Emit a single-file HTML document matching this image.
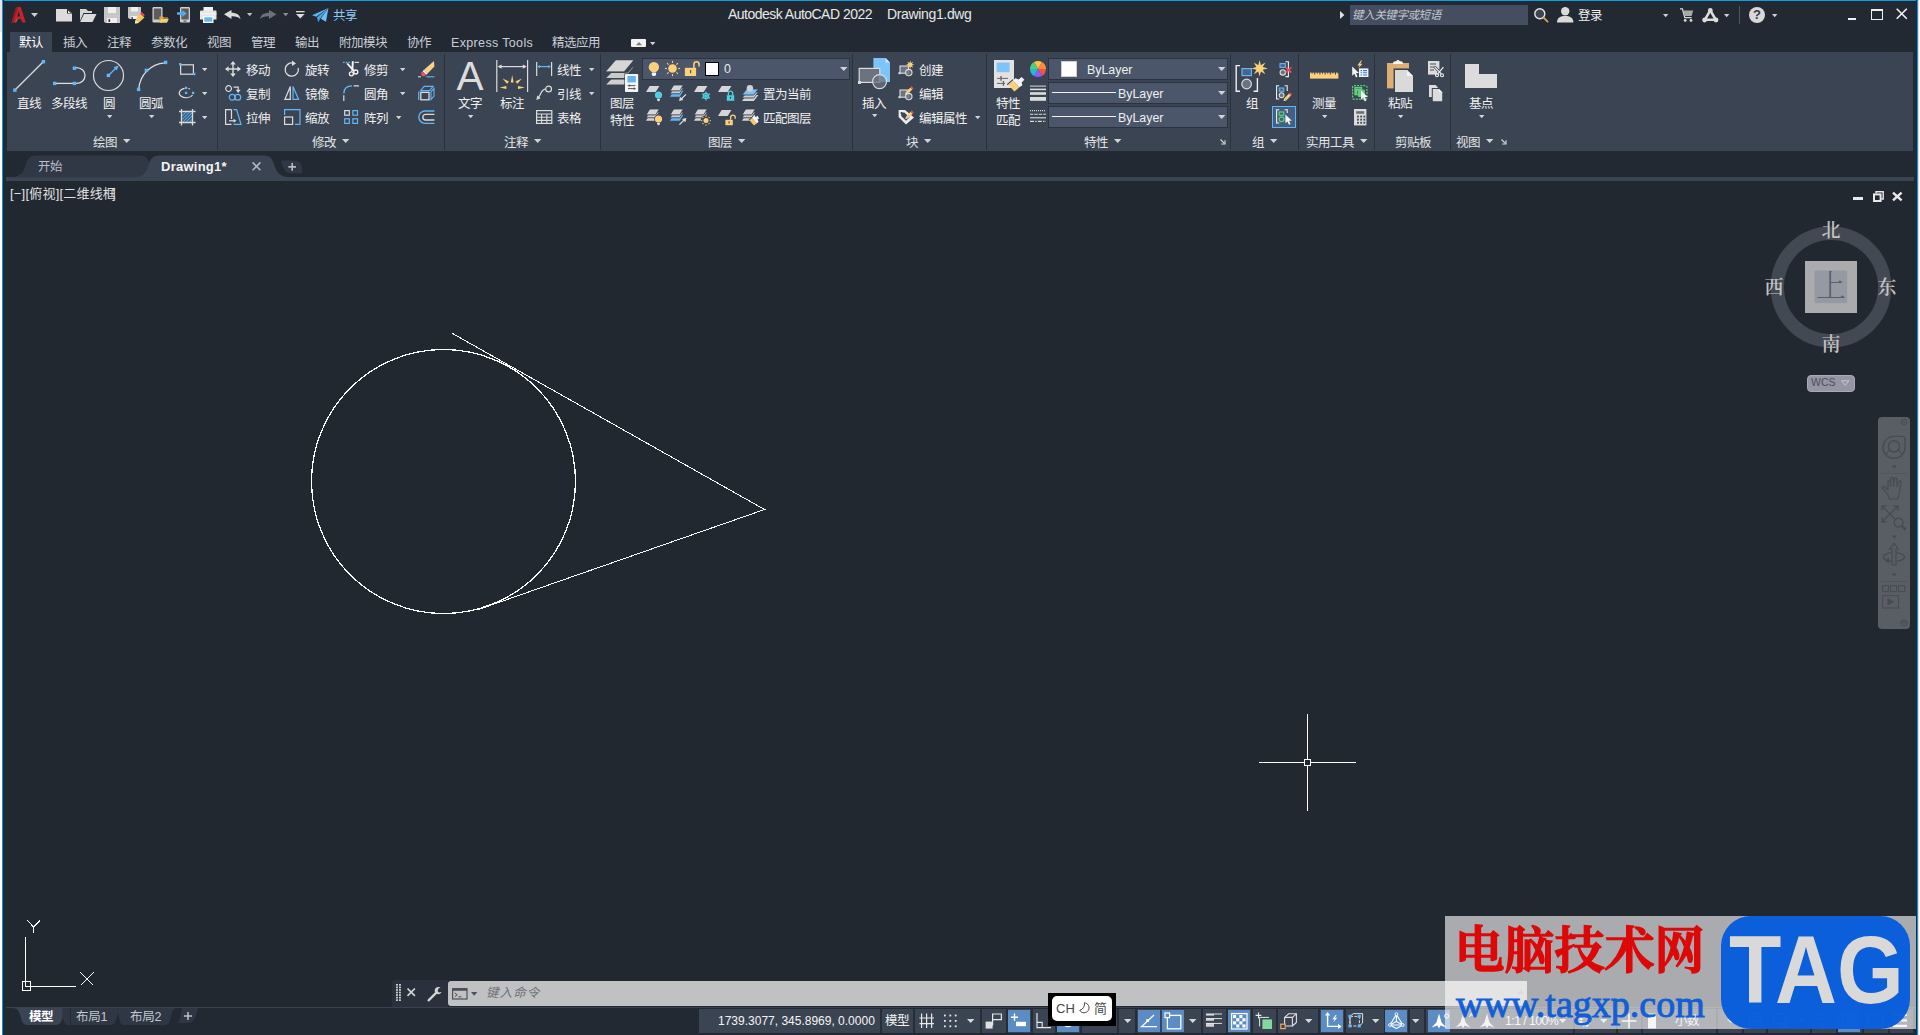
<!DOCTYPE html>
<html lang="zh-CN"><head><meta charset="utf-8"><title>Autodesk AutoCAD 2022 Drawing1.dwg</title>
<style>
*{box-sizing:border-box;margin:0;padding:0}
html,body{width:1920px;height:1035px;overflow:hidden;background:#222933}
body{position:relative;font-family:"Liberation Sans","Noto Sans CJK SC",sans-serif;font-size:12px;color:#f0f0f0}
.abs{position:absolute}
.t{position:absolute;white-space:nowrap;line-height:16px;height:16px;font-size:12.5px;letter-spacing:-0.5px}
.pt{color:#e4e4e4}
.mt{color:#c9ced6}
svg{position:absolute;overflow:visible}
#edgeL1{left:0;top:0;width:2px;height:1035px;background:linear-gradient(#e8e8e8 0,#e8e8e8 32px,#fff 32px)}
#edgeL2{left:2px;top:0;width:2px;height:1035px;background:linear-gradient(90deg,#0a96dc 0,#0a96dc 1px,#25262c 1px)}
#edgeT{left:2px;top:0;width:1916px;height:2px;background:linear-gradient(#08a0e6 0,#08a0e6 1px,#25262c 1px)}
#edgeR1{left:1916px;top:0;width:2px;height:1035px;background:linear-gradient(90deg,#25262c 0,#25262c 1px,#0a96dc 1px)}
#edgeR2{left:1918px;top:0;width:2px;height:1035px;background:linear-gradient(90deg,#dedede 0,#dedede 1px,#fff 1px)}
#ribbon{left:7px;top:52px;width:1906px;height:99px;background:#3b4453}
#tabact{left:10px;top:32px;width:42px;height:20px;background:#3b4453}
#docband{left:6px;top:177px;width:1908px;height:4px;background:#3b4453}
#draw{left:3px;top:181px;width:1914px;height:826px;background:#212830}
#statline{left:6px;top:1007px;width:1911px;height:1px;background:#3a4250}
</style></head><body>
<div class="abs" id="ribbon"></div>
<div class="abs" id="tabact"></div>
<div class="abs" id="docband"></div>
<div class="abs" id="draw"></div>
<div class="abs" id="statline"></div>
<!--TITLE-->
<!-- title bar -->
<svg style="left:11px;top:6px" width="16" height="18" viewBox="0 0 16 18"><path d="M5.2 1H9.8L14.7 16.5H11.1L10 13H5.4L3.8 16.5H0.5Z M6.2 10.4H9.2L7.7 5Z" fill="#c4232b" fill-rule="evenodd"/><path d="M5.2 1H7.2L2.4 16.5H0.5Z" fill="#9c1a21"/><path d="M3.8 16.5L5.4 13H7L5 16.5Z" fill="#d8777c" opacity=".7"/></svg>
<svg style="left:31px;top:13px" width="8" height="5"><path d="M0 0H7L3.5 4Z" fill="#d0d0d0"/></svg>
<svg style="left:56px;top:9px" width="16" height="13"><path d="M0 0H11.4L16 4.2V12.4H0Z" fill="#dcdcdc"/><path d="M11 -0.4L16.4 4.6H11Z" fill="#222933"/><path d="M12 1.4L14.8 4H12Z" fill="#f4f4f4"/></svg>
<svg style="left:80px;top:9px" width="17" height="13"><path d="M0 0H6L8 2H12V4H3.5L0 12Z" fill="#d4d4d4"/><path d="M4 5H16.5L12.5 13H0.2Z" fill="#dcdcdc"/></svg>
<svg style="left:104px;top:7px" width="16" height="16"><path d="M0 0H16V16H1.5L0 14.5Z" fill="#c6c6c6"/><rect x="4" y="0" width="8" height="6" fill="#efefef"/><rect x="3" y="11" width="10" height="5" fill="#efefef"/><rect x="4.5" y="12.2" width="1.6" height="2.8" fill="#333"/></svg>
<svg style="left:128px;top:7px" width="17" height="16"><path d="M0 0H13V12H1.5L0 10.5Z" fill="#c6c6c6"/><rect x="3" y="0" width="7" height="4.5" fill="#efefef"/><rect x="2.5" y="9" width="7" height="3" fill="#efefef"/><rect x="3.5" y="10" width="1.3" height="2" fill="#333"/><path d="M12 6.5L16.5 10.5L10.5 16L7 16.5L7.5 13Z" fill="#f0c75e"/><path d="M12 6.5L13.6 5L16.9 8L15.5 9.6Z" fill="#ec4a5a"/><path d="M7.5 13L10.5 16L7 16.5Z" fill="#e8e8e8"/></svg>
<svg style="left:152px;top:7px" width="17" height="16"><rect x="0.5" y="0" width="10" height="15.5" rx="1.2" fill="#cfcfcf"/><rect x="1.8" y="1.5" width="7.4" height="11" fill="#5c5c5c"/><path d="M7.5 9.5H11L12 10.5H16V11.5H9.5L7.5 15.5Z" fill="#e0a93c"/><path d="M9.5 11.8H16.8L15 15.8H7.6Z" fill="#f5ce6e"/></svg>
<svg style="left:177px;top:7px" width="14" height="16"><rect x="3" y="0" width="10" height="15.5" rx="1.2" fill="#cfcfcf"/><rect x="4.3" y="1.5" width="7.4" height="11" fill="#5c5c5c"/><rect x="6.5" y="13.6" width="3" height="0.9" fill="#333"/><path d="M0 5.2H5.5V3L9.5 6.5L5.5 10V7.8H0Z" fill="#4fb0f0"/></svg>
<svg style="left:200px;top:7px" width="17" height="16"><rect x="3.5" y="0" width="9.5" height="5" fill="#f2f2f2"/><path d="M0 4.5Q0 3.5 1 3.5H15.5Q16.5 3.5 16.5 4.5V12.5H0Z" fill="#e6e6e6"/><rect x="0" y="6" width="16.5" height="1.6" fill="#fafafa" opacity=".6"/><rect x="3" y="9" width="10.5" height="7" fill="#fafafa"/><rect x="4.3" y="10.3" width="8" height="4.4" fill="#64b5f6"/></svg>
<svg style="left:224px;top:10px" width="17" height="10"><path d="M0 4.3L7.5 0V2.7C12.5 2.7 16 4.8 16.5 9.3C14.5 6.8 11.5 6.2 7.5 6.3V9Z" fill="#dcdcdc"/></svg>
<svg style="left:247px;top:13px" width="6" height="4"><path d="M0 0H5.4L2.7 3.2Z" fill="#c0c0c0"/></svg>
<svg style="left:260px;top:10px" width="17" height="10"><path d="M16.5 4.3L9 0V2.7C4 2.7 0.5 4.8 0 9.3C2 6.8 5 6.2 9 6.3V9Z" fill="#6c727c"/></svg>
<svg style="left:283px;top:13px" width="6" height="4"><path d="M0 0H5.4L2.7 3.2Z" fill="#8a8f98"/></svg>
<svg style="left:296px;top:11px" width="9" height="8"><rect x="0" y="0" width="8.6" height="1.3" fill="#dcdcdc"/><path d="M0 3H8.6L4.3 7.6Z" fill="#dcdcdc"/></svg>
<svg style="left:312px;top:8px" width="17" height="15"><path d="M16.4 0L0 7.3L4.2 8.8Z" fill="#5bb5f2"/><path d="M16.4 0L5 9.3L6.2 14.3L8.3 10.6Z" fill="#4aa3e0"/><path d="M16.4 0L8.8 10.8L14 13.8Z" fill="#6cc0f8"/></svg>
<div class="t" style="left:333px;top:8px;color:#8fcaf5">共享</div>
<div class="t" style="left:728px;top:6px;font-size:14px;color:#e8e8e8;letter-spacing:-0.52px">Autodesk AutoCAD 2022</div>
<div class="t" style="left:887px;top:6px;font-size:14px;color:#e8e8e8;letter-spacing:-0.35px">Drawing1.dwg</div>
<svg style="left:1340px;top:11px" width="5" height="9"><path d="M0 0L4.4 4L0 8Z" fill="#e0e0e0"/></svg>
<div class="abs" style="left:1350px;top:5px;width:178px;height:20px;background:#454e61"></div>
<div class="t" style="left:1352px;top:7px;font-size:11.5px;font-style:italic;color:#c4c7cc;letter-spacing:-0.4px">键入关键字或短语</div>
<svg style="left:1534px;top:8px" width="15" height="15"><circle cx="5.8" cy="5.8" r="5" fill="#3d4452" stroke="#e8e8e8" stroke-width="1.4"/><path d="M9.6 9.6L13.6 13.6" stroke="#d9a25a" stroke-width="1.8" stroke-linecap="round"/></svg>
<svg style="left:1557px;top:7px" width="17" height="16"><circle cx="8.2" cy="4.3" r="4.2" fill="#dadada"/><path d="M0 15.5C0 10.5 3.5 9 8.2 9S16.4 10.5 16.4 15.5Z" fill="#dadada"/></svg>
<div class="t" style="left:1578px;top:8px;color:#f0f0f0">登录</div>
<svg style="left:1663px;top:14px" width="6" height="4"><path d="M0 0H5.4L2.7 3.2Z" fill="#d0d0d0"/></svg>
<svg style="left:1680px;top:8px" width="14" height="15"><path d="M0 0.8H2.4L4.8 9.6H11.6" fill="none" stroke="#dcdcdc" stroke-width="1.3"/><path d="M3.2 2.6H13.2L11.6 8H4.6Z" fill="#a9a9a9"/><circle cx="5.2" cy="12.4" r="1.4" fill="#dcdcdc"/><circle cx="11" cy="12.4" r="1.4" fill="#dcdcdc"/></svg>
<svg style="left:1702px;top:8px" width="17" height="15"><path d="M8.3 2.4L2.8 11.8H13.8Z" fill="none" stroke="#dcdcdc" stroke-width="2.6" stroke-linejoin="round"/><circle cx="8.3" cy="2.4" r="2.4" fill="#dcdcdc"/><circle cx="2.6" cy="12" r="2.4" fill="#dcdcdc"/><circle cx="14" cy="12" r="2.4" fill="#dcdcdc"/></svg>
<svg style="left:1724px;top:14px" width="6" height="4"><path d="M0 0H5.4L2.7 3.2Z" fill="#d0d0d0"/></svg>
<div class="abs" style="left:1739px;top:6px;width:1px;height:18px;background:#4b5567"></div>
<div class="abs" style="left:1749px;top:7px;width:16px;height:16px;border-radius:8px;background:#d8d8d8;color:#333a46;font-weight:bold;font-size:13px;line-height:16px;text-align:center">?</div>
<svg style="left:1772px;top:14px" width="6" height="4"><path d="M0 0H5.4L2.7 3.2Z" fill="#d0d0d0"/></svg>
<div class="abs" style="left:1848px;top:18px;width:8px;height:2px;background:#f0f0f0"></div>
<div class="abs" style="left:1871px;top:9px;width:12px;height:11px;border:1px solid #f0f0f0;border-top-width:2px"></div>
<svg style="left:1896px;top:8px" width="12" height="12"><path d="M0.7 0.7L10.8 10.8M10.8 0.7L0.7 10.8" stroke="#f0f0f0" stroke-width="1.6"/></svg>
<!-- menu tabs -->
<div class="t" style="left:19px;top:35px;color:#ffffff">默认</div>
<div class="t mt" style="left:63px;top:35px">插入</div>
<div class="t mt" style="left:107px;top:35px">注释</div>
<div class="t mt" style="left:151px;top:35px">参数化</div>
<div class="t mt" style="left:207px;top:35px">视图</div>
<div class="t mt" style="left:251px;top:35px">管理</div>
<div class="t mt" style="left:295px;top:35px">输出</div>
<div class="t mt" style="left:339px;top:35px">附加模块</div>
<div class="t mt" style="left:407px;top:35px">协作</div>
<div class="t mt" style="left:451px;top:35px;font-size:12.5px;letter-spacing:0.35px">Express Tools</div>
<div class="t mt" style="left:552px;top:35px">精选应用</div>
<div class="abs" style="left:631px;top:39px;width:15px;height:8px;background:#f2f2f2;border-radius:1px"></div>
<svg style="left:635.5px;top:41.5px" width="7" height="4"><path d="M0 3.2H6L3 0Z" fill="#7a7a7a"/></svg>
<svg style="left:650px;top:42px" width="6" height="4"><path d="M0 0H5.4L2.7 3.2Z" fill="#d0d0d0"/></svg>
<!--RIBBON-->
<div class="abs" style="left:217px;top:54px;width:1px;height:96px;background:#2a313c"></div>
<div class="abs" style="left:444px;top:54px;width:1px;height:96px;background:#2a313c"></div>
<div class="abs" style="left:600px;top:54px;width:1px;height:96px;background:#2a313c"></div>
<div class="abs" style="left:852px;top:54px;width:1px;height:96px;background:#2a313c"></div>
<div class="abs" style="left:986px;top:54px;width:1px;height:96px;background:#2a313c"></div>
<div class="abs" style="left:1230px;top:54px;width:1px;height:96px;background:#2a313c"></div>
<div class="abs" style="left:1298px;top:54px;width:1px;height:96px;background:#2a313c"></div>
<div class="abs" style="left:1374px;top:54px;width:1px;height:96px;background:#2a313c"></div>
<div class="abs" style="left:1450px;top:54px;width:1px;height:96px;background:#2a313c"></div>
<svg style="left:13px;top:60px" width="32" height="32"><path d="M2.2 29.8L29.8 2.2" stroke="#dcdcdc" stroke-width="1.3"/><rect x="0.19999999999999996" y="28.400000000000002" width="3.4" height="3.4" fill="#62b8f6"/><rect x="28.7" y="0.0" width="3.4" height="3.4" fill="#62b8f6"/></svg>
<svg style="left:52px;top:64px" width="34" height="22"><path d="M3 19.4H22" stroke="#dcdcdc" stroke-width="1.3" fill="none"/><path d="M24 3.6C36 3.6 36 19.4 24 19.4" stroke="#dcdcdc" stroke-width="1.3" fill="none"/><rect x="1.0000000000000002" y="17.7" width="3.4" height="3.4" fill="#62b8f6"/><rect x="20.7" y="17.7" width="3.4" height="3.4" fill="#62b8f6"/><rect x="20.7" y="2.5" width="3.4" height="3.4" fill="#62b8f6"/></svg>
<svg style="left:93px;top:60px" width="32" height="32"><circle cx="15.5" cy="15.5" r="15" fill="none" stroke="#dcdcdc" stroke-width="1.2"/><path d="M15.5 15.5L24 7" stroke="#62b8f6" stroke-width="1.3"/><path d="M25.6 5.4L20.6 7.2L23.8 10.4Z" fill="#62b8f6"/><rect x="13.700000000000001" y="13.700000000000001" width="3.4" height="3.4" fill="#62b8f6"/></svg>
<svg style="left:136px;top:60px" width="32" height="32"><path d="M2.7 29C4 15 14 4 29 2.8" stroke="#dcdcdc" stroke-width="1.3" fill="none"/><rect x="0.9000000000000001" y="27.7" width="3.4" height="3.4" fill="#62b8f6"/><rect x="8.700000000000001" y="8.700000000000001" width="3.4" height="3.4" fill="#62b8f6"/><rect x="27.900000000000002" y="0.7" width="3.4" height="3.4" fill="#62b8f6"/></svg>
<div class="t" style="left:17px;top:96px">直线</div>
<div class="t" style="left:51px;top:96px">多段线</div>
<div class="t" style="left:103px;top:96px">圆</div>
<div class="t" style="left:139px;top:96px">圆弧</div>
<svg style="left:107px;top:115px" width="6.4" height="4.2"><path d="M0 0H5.4L2.7 3.2Z" fill="#d4d4d4"/></svg>
<svg style="left:149px;top:115px" width="6.4" height="4.2"><path d="M0 0H5.4L2.7 3.2Z" fill="#d4d4d4"/></svg>
<svg style="left:179px;top:61px" width="17" height="16"><rect x="1.6" y="3.8" width="12.8" height="9.4" fill="none" stroke="#dcdcdc" stroke-width="1.2"/><rect x="0.0" y="2.0" width="2.4" height="2.4" fill="#62b8f6"/><rect x="14.0" y="11.8" width="2.4" height="2.4" fill="#62b8f6"/></svg>
<svg style="left:179px;top:85px" width="17" height="16"><path d="M5.6 3.3A7 4.8 0 1 0 13.6 10" fill="none" stroke="#dcdcdc" stroke-width="1.2"/><path d="M9.4 3.5L11 4" stroke="#dcdcdc" stroke-width="1.1"/><rect x="5.949999999999999" y="1.75" width="2.3" height="2.3" fill="#62b8f6"/><rect x="5.949999999999999" y="6.75" width="2.3" height="2.3" fill="#62b8f6"/><rect x="12.95" y="6.75" width="2.3" height="2.3" fill="#62b8f6"/></svg>
<svg style="left:179px;top:109px" width="17" height="17"><rect x="3.2" y="3.2" width="9.6" height="9.6" fill="#3d5f80"/><path d="M3.2 7L7 3.2M3.2 10.4L10.4 3.2M4 12.8L12.8 4M7.2 12.8L12.8 7.2M10.6 12.8L12.8 10.6" stroke="#62b8f6" stroke-width="1"/><path d="M2.5 0V16.5M13.5 0V16.5M0 2.5H16.5M0 13.5H16.5" stroke="#dcdcdc" stroke-width="1.3"/></svg>
<svg style="left:202px;top:68px" width="6.4" height="4.2"><path d="M0 0H5.4L2.7 3.2Z" fill="#d4d4d4"/></svg>
<svg style="left:202px;top:92px" width="6.4" height="4.2"><path d="M0 0H5.4L2.7 3.2Z" fill="#d4d4d4"/></svg>
<svg style="left:202px;top:116px" width="6.4" height="4.2"><path d="M0 0H5.4L2.7 3.2Z" fill="#d4d4d4"/></svg>
<div class="t pt" style="left:93px;top:135px">绘图</div>
<svg style="left:123px;top:139px" width="8.4" height="5"><path d="M0 0H7.4L3.7 4Z" fill="#d4d4d4"/></svg>
<svg style="left:225px;top:61px" width="16" height="16"><path d="M8 1V15M1 8H15" stroke="#dcdcdc" stroke-width="1.4"/><path d="M8 0L5.2 3.6H10.8ZM8 16L5.2 12.4H10.8ZM0 8L3.6 5.2V10.8ZM16 8L12.4 5.2V10.8Z" fill="#dcdcdc"/></svg>
<svg style="left:225px;top:85px" width="17" height="16"><circle cx="3.6" cy="3.6" r="2.9" fill="none" stroke="#dcdcdc" stroke-width="1.2"/><path d="M8.5 2.2H13.2V5.5" fill="none" stroke="#dcdcdc" stroke-width="1.2"/><path d="M13.2 8L10.8 4.8H15.6Z" fill="#dcdcdc"/><circle cx="7.2" cy="12.2" r="2.9" fill="none" stroke="#62b8f6" stroke-width="1.2"/><circle cx="12.8" cy="12.2" r="2.9" fill="none" stroke="#62b8f6" stroke-width="1.2"/></svg>
<svg style="left:225px;top:109px" width="17" height="16"><path d="M6.5 0.6H0.6V15.4H6.5" fill="none" stroke="#dcdcdc" stroke-width="1.2"/><path d="M6.5 0.6V10" stroke="#dcdcdc" stroke-width="1.2"/><path d="M8.5 0.6H11.6L16 15.4H8.5" fill="none" stroke="#62b8f6" stroke-width="1.2"/><path d="M4 11.8H9.5" stroke="#dcdcdc" stroke-width="1.2"/><path d="M11.4 11.8L8.6 9.8V13.8Z" fill="#dcdcdc"/></svg>
<svg style="left:284px;top:61px" width="16" height="16"><path d="M9.5 2.2A6.6 6.6 0 1 0 14.2 7" fill="none" stroke="#dcdcdc" stroke-width="1.3"/><path d="M12 2.4L8 -0.4V5Z" fill="#dcdcdc"/></svg>
<svg style="left:284px;top:85px" width="16" height="16"><path d="M6.3 1.5V14.4H0.9Z" fill="none" stroke="#dcdcdc" stroke-width="1.2"/><path d="M9 1.5V14.4H14.6Z" fill="none" stroke="#62b8f6" stroke-width="1.2"/></svg>
<svg style="left:284px;top:109px" width="17" height="17"><path d="M0.6 6V0.6H16V15.4H11" fill="none" stroke="#62b8f6" stroke-width="1.2"/><rect x="0.6" y="8" width="8" height="7.4" fill="none" stroke="#dcdcdc" stroke-width="1.2"/></svg>
<svg style="left:343px;top:61px" width="17" height="17"><path d="M0 1.4H7.4" stroke="#62b8f6" stroke-width="1.2" stroke-dasharray="1.6 1"/><path d="M11.6 1.4H16" stroke="#dcdcdc" stroke-width="1.2"/><path d="M8.8 0.2H10.8L10.4 8.6L8.4 11.4Z" fill="#f4f4f4"/><path d="M3.4 2.8L5 2L11.8 9.4L10.2 10.8Z" fill="#f4f4f4"/><circle cx="8.4" cy="12.8" r="2" fill="none" stroke="#f4f4f4" stroke-width="1.3"/><circle cx="12.8" cy="11" r="2" fill="none" stroke="#f4f4f4" stroke-width="1.3"/></svg>
<svg style="left:343px;top:85px" width="17" height="17"><path d="M0.8 8.4C0.8 3.6 4 0.8 9 0.8" fill="none" stroke="#62b8f6" stroke-width="1.3"/><path d="M10.6 0.8H16M0.8 10.2V16" stroke="#dcdcdc" stroke-width="1.2"/></svg>
<svg style="left:343px;top:109px" width="17" height="17"><rect x="1.7" y="1.6" width="4.6" height="4.6" fill="none" stroke="#dcdcdc" stroke-width="1.2"/><rect x="9.9" y="1.6" width="4.6" height="4.6" fill="none" stroke="#62b8f6" stroke-width="1.2"/><rect x="1.7" y="9.8" width="4.6" height="4.6" fill="none" stroke="#62b8f6" stroke-width="1.2"/><rect x="9.9" y="9.8" width="4.6" height="4.6" fill="none" stroke="#62b8f6" stroke-width="1.2"/></svg>
<svg style="left:418px;top:61px" width="17" height="17"><path d="M16 0L16.4 5.6L9.6 12.4L6 8.8Z" fill="#f9d37f"/><path d="M6 8.8L9.6 12.4L8.2 13.8L4.6 10.2Z" fill="#f4f4f4"/><path d="M4.6 10.2L8.2 13.8L7 15Q5 15.8 3.6 14.4Q2.6 12.8 3.4 11.4Z" fill="#f0505e"/><path d="M0 15.8H3" stroke="#dcdcdc" stroke-width="1.1"/><path d="M8.4 15.8H16.4" stroke="#62b8f6" stroke-width="1.1"/></svg>
<svg style="left:418px;top:85px" width="17" height="17"><path d="M2.6 5.6L6.2 1.4H15.2L11.6 5.6Z" fill="none" stroke="#62b8f6" stroke-width="1.1"/><path d="M13 6.8L16 3.4V11L13 14.6Z" fill="none" stroke="#62b8f6" stroke-width="1.1"/><path d="M0.7 6.4V15" stroke="#62b8f6" stroke-width="1.2"/><rect x="2.8" y="7.4" width="8.2" height="7.4" fill="none" stroke="#dcdcdc" stroke-width="1.3"/></svg>
<svg style="left:418px;top:109px" width="17" height="17"><path d="M16.4 2H7A6.2 6.2 0 0 0 7 14.4H16.4" fill="none" stroke="#62b8f6" stroke-width="1.3"/><path d="M16.4 5.4H7.6A2.8 2.8 0 0 0 7.6 11H16.4" fill="none" stroke="#dcdcdc" stroke-width="1.3"/></svg>
<div class="t" style="left:246px;top:63px">移动</div>
<div class="t" style="left:305px;top:63px">旋转</div>
<div class="t" style="left:364px;top:63px">修剪</div>
<div class="t" style="left:246px;top:87px">复制</div>
<div class="t" style="left:305px;top:87px">镜像</div>
<div class="t" style="left:364px;top:87px">圆角</div>
<div class="t" style="left:246px;top:111px">拉伸</div>
<div class="t" style="left:305px;top:111px">缩放</div>
<div class="t" style="left:364px;top:111px">阵列</div>
<svg style="left:400px;top:68px" width="6.4" height="4.2"><path d="M0 0H5.4L2.7 3.2Z" fill="#d4d4d4"/></svg>
<svg style="left:400px;top:92px" width="6.4" height="4.2"><path d="M0 0H5.4L2.7 3.2Z" fill="#d4d4d4"/></svg>
<svg style="left:396px;top:116px" width="6.4" height="4.2"><path d="M0 0H5.4L2.7 3.2Z" fill="#d4d4d4"/></svg>
<div class="t pt" style="left:312px;top:135px">修改</div>
<svg style="left:342px;top:139px" width="8.4" height="5"><path d="M0 0H7.4L3.7 4Z" fill="#d4d4d4"/></svg>
<div class="abs" style="left:456px;top:56px;width:28px;height:40px;font-size:40.6px;line-height:40px;color:#dcdcdc;text-align:center">A</div>
<div class="t" style="left:458px;top:96px">文字</div>
<svg style="left:468px;top:115px" width="6.4" height="4.2"><path d="M0 0H5.4L2.7 3.2Z" fill="#d4d4d4"/></svg>
<svg style="left:496px;top:60px" width="33" height="33"><path d="M0.8 0V32M31.6 0V32" stroke="#dcdcdc" stroke-width="1.2"/><path d="M3 6.6H29.4" stroke="#dcdcdc" stroke-width="1.2"/><path d="M1.6 6.6L5.6 4.4V8.8ZM30.8 6.6L26.8 4.4V8.8Z" fill="#dcdcdc"/><path d="M16.2 15L17.6 22.4H14.8Z" fill="#fdd17a"/><path d="M6.6 18.4L13 21.4L11 23.8Z" fill="#fdd17a"/><path d="M25.8 18.4L19.4 21.4L21.4 23.8Z" fill="#fdd17a"/><path d="M3.6 27.6L10.4 26V29Z" fill="#fdd17a"/><path d="M28.8 27.6L22 26V29Z" fill="#fdd17a"/></svg>
<div class="t" style="left:500px;top:96px">标注</div>
<svg style="left:536px;top:62px" width="17" height="15"><path d="M0.7 0V14M15.6 0V14" stroke="#dcdcdc" stroke-width="1.2"/><path d="M2.2 4.6H14" stroke="#62b8f6" stroke-width="1.2"/><path d="M1.4 4.6L4 3V6.2ZM14.9 4.6L12.3 3V6.2Z" fill="#62b8f6"/></svg>
<svg style="left:536px;top:85px" width="17" height="16"><circle cx="12.6" cy="4" r="2.9" fill="none" stroke="#dcdcdc" stroke-width="1.2"/><path d="M9.6 4.2C5 4.2 5.6 9 1.6 13.6" fill="none" stroke="#dcdcdc" stroke-width="1.2"/><path d="M0.4 15L1.2 10.4L4.6 13.2Z" fill="#dcdcdc"/></svg>
<svg style="left:536px;top:110px" width="17" height="15"><rect x="0.6" y="0.6" width="15.2" height="12.8" fill="none" stroke="#dcdcdc" stroke-width="1.2"/><path d="M0.6 4H15.8M0.6 7.2H15.8M0.6 10.4H15.8M5.6 4V13.4M10.8 4V13.4" stroke="#dcdcdc" stroke-width="1.1"/></svg>
<div class="t" style="left:557px;top:63px">线性</div>
<div class="t" style="left:557px;top:87px">引线</div>
<div class="t" style="left:557px;top:111px">表格</div>
<svg style="left:589px;top:68px" width="6.4" height="4.2"><path d="M0 0H5.4L2.7 3.2Z" fill="#d4d4d4"/></svg>
<svg style="left:589px;top:92px" width="6.4" height="4.2"><path d="M0 0H5.4L2.7 3.2Z" fill="#d4d4d4"/></svg>
<div class="t pt" style="left:504px;top:135px">注释</div>
<svg style="left:534px;top:139px" width="8.4" height="5"><path d="M0 0H7.4L3.7 4Z" fill="#d4d4d4"/></svg>
<svg style="left:606px;top:60px" width="34" height="33"><path d="M9.8 0.2H27.4L18 11.6H0Z" fill="#d6d6d6"/><path d="M4 13.2L19 13.2L25 6" fill="none" stroke="none"/><path d="M5.5 12.8H22L26.6 7.2L27.2 7.2L18.4 18H0.2Z" fill="#c9c9c9"/><path d="M5.5 19.2H22L26.6 13.6L27.2 13.6L18.4 24.4H0.2Z" fill="#d0d0d0"/><path d="M0 12.4H19" stroke="#3b4453" stroke-width="1.2" fill="none"/><path d="M0 18.8H19" stroke="#3b4453" stroke-width="1.2" fill="none"/><rect x="18.4" y="13.4" width="14" height="18.8" fill="#3b4453"/><rect x="19" y="14" width="13.2" height="18" rx="0.8" fill="#f4f4f4"/><rect x="21.4" y="16" width="8.4" height="6.4" fill="#64b5f6"/><path d="M22.6 25.6H29.4M22 28.6H28.8" stroke="#555" stroke-width="1"/><path d="M21.4 25.6L23.6 24.2V27ZM30 28.6L27.8 27.2V30Z" fill="#555"/></svg>
<div class="t" style="left:610px;top:96px">图层</div>
<div class="t" style="left:610px;top:113px">特性</div>
<div class="abs" style="left:642px;top:58px;width:208px;height:22px;background:#4b566a;border:1px solid #2c333f"></div>
<svg style="left:648px;top:61px" width="14" height="16"><circle cx="5.9" cy="6.1" r="5.2" fill="#fdd17a"/><path d="M3.8 11.4H8.1V13.4Q8.1 15 5.95 15T3.8 13.4Z" fill="#f4f4f4"/></svg>
<svg style="left:664px;top:61px" width="17" height="16"><circle cx="8.5" cy="7.5" r="4.3" fill="#fdd17a"/><path d="M14.10 7.50L16.10 7.50" stroke="#fdd17a" stroke-width="1.1"/><path d="M12.46 11.46L13.87 12.87" stroke="#fdd17a" stroke-width="1.1"/><path d="M8.50 13.10L8.50 15.10" stroke="#fdd17a" stroke-width="1.1"/><path d="M4.54 11.46L3.13 12.87" stroke="#fdd17a" stroke-width="1.1"/><path d="M2.90 7.50L0.90 7.50" stroke="#fdd17a" stroke-width="1.1"/><path d="M4.54 3.54L3.13 2.13" stroke="#fdd17a" stroke-width="1.1"/><path d="M8.50 1.90L8.50 -0.10" stroke="#fdd17a" stroke-width="1.1"/><path d="M12.46 3.54L13.87 2.13" stroke="#fdd17a" stroke-width="1.1"/></svg>
<svg style="left:684px;top:61px" width="16" height="16"><path d="M9.9 7V3.4A2.6 2.6 0 0 1 15.1 3.4V5.6" fill="none" stroke="#fdd17a" stroke-width="1.5"/><rect x="0.9" y="6.8" width="11.2" height="8.2" fill="#fdd17a"/><rect x="6" y="9" width="1.2" height="3.2" fill="#4b566a"/></svg>
<div class="abs" style="left:705px;top:62px;width:14px;height:14px;background:#ffffff;border:1px solid #000"></div>
<div class="t" style="left:724px;top:61px;color:#e8e8e8;font-size:12.4px;letter-spacing:0">0</div>
<svg style="left:840px;top:67px" width="8.4" height="5"><path d="M0 0H7.4L3.7 4Z" fill="#d4d4d4"/></svg>
<svg style="left:646px;top:85px" width="17" height="17"><path d="M3.70 1.00H13.40L9.70 6.90H0.00Z" fill="#d6d6d6"/><circle cx="12.5" cy="10" r="3.6" fill="#4fd0e0"/><rect x="11.2" y="13.799999999999999" width="2.6" height="1.8" fill="#f4f4f4"/><path d="M11.5 15.6H13.5L12.5 16.6Z" fill="#f4f4f4"/></svg>
<svg style="left:670px;top:85px" width="17" height="17"><path d="M3.70 5.80H13.40L9.70 11.70H0.00Z" fill="#62b8f6"/><path d="M3.70 2.90H13.40L9.70 8.80H0.00Z" fill="#cdcdcd" stroke="#3b4453" stroke-width="0.9"/><path d="M3.70 0.00H13.40L9.70 5.90H0.00Z" fill="#d6d6d6" stroke="#3b4453" stroke-width="0.9"/><path d="M16 9.4L11 14.2" stroke="#dcdcdc" stroke-width="1.3"/><path d="M9 16L10 11.8L13.4 15Z" fill="#dcdcdc"/></svg>
<svg style="left:694px;top:85px" width="17" height="17"><path d="M3.70 1.00H13.40L9.70 6.90H0.00Z" fill="#d6d6d6"/><g stroke="#4fd0e0" stroke-width="1.2"><path d="M12 6.4V15.6M8 8.7L16 13.3M8 13.3L16 8.7"/></g><circle cx="12" cy="11" r="2.7" fill="none" stroke="#4fd0e0" stroke-width="1.1"/></svg>
<svg style="left:718px;top:85px" width="17" height="17"><path d="M3.70 1.00H13.40L9.70 6.90H0.00Z" fill="#d6d6d6"/><path d="M10.4 10.2V8.2A2.1 2.1 0 0 1 14.600000000000003 8.2V10.2" fill="none" stroke="#4fd0e0" stroke-width="1.3"/><rect x="8.8" y="10.2" width="7.4" height="5.6" fill="#4fd0e0"/><rect x="11.9" y="11.799999999999999" width="1.2" height="2" fill="#3b4453"/></svg>
<svg style="left:742px;top:85px" width="18" height="17"><path d="M4.60 10.00H16.40L11.80 16.00H0.00Z" fill="#d6d6d6"/><path d="M4.60 7.00H16.40L11.80 13.00H0.00Z" fill="#cdcdcd" stroke="#3b4453" stroke-width="0.9"/><path d="M4.60 4.00H16.40L11.80 10.00H0.00Z" fill="#7cc4fa" stroke="#3b4453" stroke-width="0.9"/><circle cx="7.9" cy="3.2" r="3.2" fill="#d2d2d2"/></svg>
<svg style="left:646px;top:109px" width="17" height="17"><path d="M3.70 5.80H13.40L9.70 11.70H0.00Z" fill="#d6d6d6"/><path d="M3.70 2.90H13.40L9.70 8.80H0.00Z" fill="#cdcdcd" stroke="#3b4453" stroke-width="0.9"/><path d="M3.70 0.00H13.40L9.70 5.90H0.00Z" fill="#d6d6d6" stroke="#3b4453" stroke-width="0.9"/><circle cx="12.5" cy="10" r="4.4" fill="#3b4453"/><circle cx="12.5" cy="10" r="3.6" fill="#fdd17a"/><rect x="11.2" y="13.799999999999999" width="2.6" height="1.8" fill="#f4f4f4"/><path d="M11.5 15.6H13.5L12.5 16.6Z" fill="#f4f4f4"/></svg>
<svg style="left:670px;top:109px" width="17" height="17"><path d="M3.70 5.80H13.40L9.70 11.70H0.00Z" fill="#62b8f6"/><path d="M3.70 2.90H13.40L9.70 8.80H0.00Z" fill="#cdcdcd" stroke="#3b4453" stroke-width="0.9"/><path d="M3.70 0.00H13.40L9.70 5.90H0.00Z" fill="#d6d6d6" stroke="#3b4453" stroke-width="0.9"/><path d="M9.4 15.6L14.4 10.8" stroke="#dcdcdc" stroke-width="1.3"/><path d="M16.4 9L15.4 13.2L12 10Z" fill="#dcdcdc"/></svg>
<svg style="left:694px;top:109px" width="17" height="17"><path d="M3.70 5.80H13.40L9.70 11.70H0.00Z" fill="#d6d6d6"/><path d="M3.70 2.90H13.40L9.70 8.80H0.00Z" fill="#cdcdcd" stroke="#3b4453" stroke-width="0.9"/><path d="M3.70 0.00H13.40L9.70 5.90H0.00Z" fill="#d6d6d6" stroke="#3b4453" stroke-width="0.9"/><circle cx="12" cy="11.6" r="5.4" fill="#3b4453"/><circle cx="12" cy="11.6" r="2.5" fill="#fdd17a"/><path d="M15.80 11.60L16.80 11.60" stroke="#fdd17a" stroke-width="1.3" stroke-dasharray="1.2 3"/><path d="M14.69 14.29L15.39 14.99" stroke="#fdd17a" stroke-width="1.3" stroke-dasharray="1.2 3"/><path d="M12.00 15.40L12.00 16.40" stroke="#fdd17a" stroke-width="1.3" stroke-dasharray="1.2 3"/><path d="M9.31 14.29L8.61 14.99" stroke="#fdd17a" stroke-width="1.3" stroke-dasharray="1.2 3"/><path d="M8.20 11.60L7.20 11.60" stroke="#fdd17a" stroke-width="1.3" stroke-dasharray="1.2 3"/><path d="M9.31 8.91L8.61 8.21" stroke="#fdd17a" stroke-width="1.3" stroke-dasharray="1.2 3"/><path d="M12.00 7.80L12.00 6.80" stroke="#fdd17a" stroke-width="1.3" stroke-dasharray="1.2 3"/><path d="M14.69 8.91L15.39 8.21" stroke="#fdd17a" stroke-width="1.3" stroke-dasharray="1.2 3"/></svg>
<svg style="left:718px;top:109px" width="17" height="17"><path d="M3.70 1.00H13.40L9.70 6.90H0.00Z" fill="#d6d6d6"/><path d="M12.600000000000001 10.8V8.4A2.3 2.3 0 0 1 17.2 8.4V9.8" fill="none" stroke="#fdd17a" stroke-width="1.3"/><rect x="7.4" y="10.8" width="7.4" height="5.4" fill="#fdd17a"/><rect x="10.500000000000002" y="12.4" width="1.2" height="2" fill="#3b4453"/></svg>
<svg style="left:742px;top:109px" width="18" height="17"><path d="M3.70 5.80H13.40L9.70 11.70H0.00Z" fill="#d6d6d6"/><path d="M3.70 2.90H13.40L9.70 8.80H0.00Z" fill="#cdcdcd" stroke="#3b4453" stroke-width="0.9"/><path d="M3.70 0.00H13.40L9.70 5.90H0.00Z" fill="#d6d6d6" stroke="#3b4453" stroke-width="0.9"/><path d="M6.6 10.6L9.8 8L15 14L11.6 16.6Z" fill="#3b4453"/><path d="M7.4 11.2L10 9L14.6 14.4L12 16.6Z" fill="#f7c95f"/><path d="M10 9L12.2 6.8L13.8 8L15.6 6.8L17 9.4L15.4 10.6L16.6 12.8L14.6 14.4Z" fill="#f4f4f4"/></svg>
<div class="t" style="left:763px;top:87px">置为当前</div>
<div class="t" style="left:763px;top:111px">匹配图层</div>
<div class="t pt" style="left:708px;top:135px">图层</div>
<svg style="left:738px;top:139px" width="8.4" height="5"><path d="M0 0H7.4L3.7 4Z" fill="#d4d4d4"/></svg>
<svg style="left:858px;top:58px" width="33" height="33"><path d="M15.4 0H27.6L32 4.4V24H15.4Z" fill="#7cc4fa"/><path d="M27.6 0L32 4.4H27.6Z" fill="#cfe9fd"/><rect x="1.2" y="10.4" width="20.6" height="14" fill="#6b7280" stroke="#dcdcdc" stroke-width="1.2"/><circle cx="21.6" cy="23.6" r="7" fill="#6b7280" fill-opacity="0.75" stroke="#dcdcdc" stroke-width="1.2"/><path d="M14.6 23.6V10.4" stroke="none"/><rect x="0" y="23" width="3" height="3" fill="#dcdcdc"/></svg>
<div class="t" style="left:862px;top:96px">插入</div>
<svg style="left:872px;top:114px" width="6.4" height="4.2"><path d="M0 0H5.4L2.7 3.2Z" fill="#d4d4d4"/></svg>
<svg style="left:898px;top:61px" width="17" height="17"><rect x="2" y="5" width="8.6" height="7.2" fill="#6b7280" stroke="#dcdcdc" stroke-width="1.1"/><circle cx="10.8" cy="11.6" r="3.2" fill="#6b7280" fill-opacity=".8" stroke="#dcdcdc" stroke-width="1.1"/><rect x="0.4" y="11.2" width="2" height="2" fill="#dcdcdc"/><path d="M12.20 -0.40L12.93 2.04L15.17 0.83L13.96 3.07L16.40 3.80L13.96 4.53L15.17 6.77L12.93 5.56L12.20 8.00L11.47 5.56L9.23 6.77L10.44 4.53L8.00 3.80L10.44 3.07L9.23 0.83L11.47 2.04Z" fill="#fdd17a"/></svg>
<svg style="left:898px;top:85px" width="17" height="17"><rect x="2" y="5" width="8.6" height="7.2" fill="#6b7280" stroke="#dcdcdc" stroke-width="1.1"/><circle cx="10.8" cy="11.6" r="3.2" fill="#6b7280" fill-opacity=".8" stroke="#dcdcdc" stroke-width="1.1"/><rect x="0.4" y="11.2" width="2" height="2" fill="#dcdcdc"/><path d="M7.2 9.6L7.8 7.0L9.8 9.0Z" fill="#efefef"/><path d="M7.8 7.0L12.4 2.3999999999999995L14.4 4.3999999999999995L9.8 9.0Z" fill="#f7cf73"/><path d="M12.4 2.3999999999999995L13.600000000000001 1.1999999999999993L15.600000000000001 3.1999999999999993L14.4 4.3999999999999995Z" fill="#ee4f5f"/></svg>
<svg style="left:898px;top:109px" width="17" height="17"><path d="M0.6 1H8.6L9.4 1.8M15 7.4L7.6 14.8L0.6 7.8Z" fill="none" stroke="#dcdcdc" stroke-width="0"/><path d="M0.6 1H7L16 8.6L8 15.6L0.6 8Z" fill="#ececec"/><path d="M3.2 3.4H6.4L11.6 8.4L8 11.8L3.2 7Z" fill="#3b4453"/><rect x="2.6" y="3.2" width="1.6" height="1.6" fill="#333"/><path d="M7.4 10L8.0 7.4L10.0 9.4Z" fill="#efefef"/><path d="M8.0 7.4L12.600000000000001 2.8L14.600000000000001 4.8L10.0 9.4Z" fill="#f7cf73"/><path d="M12.600000000000001 2.8L13.8 1.5999999999999996L15.8 3.5999999999999996L14.600000000000001 4.8Z" fill="#ee4f5f"/></svg>
<div class="t" style="left:919px;top:63px">创建</div>
<div class="t" style="left:919px;top:87px">编辑</div>
<div class="t" style="left:919px;top:111px">编辑属性</div>
<svg style="left:975px;top:116px" width="6.4" height="4.2"><path d="M0 0H5.4L2.7 3.2Z" fill="#d4d4d4"/></svg>
<div class="t pt" style="left:906px;top:135px">块</div>
<svg style="left:924px;top:139px" width="8.4" height="5"><path d="M0 0H7.4L3.7 4Z" fill="#d4d4d4"/></svg>
<svg style="left:994px;top:60px" width="32" height="33"><rect x="0" y="0" width="20" height="28" fill="#e2e2e2"/><rect x="2.6" y="2.6" width="13" height="9.6" fill="#7cc4fa"/><path d="M3 18.4H14M3 23.4H11" stroke="#666" stroke-width="1"/><path d="M7 16V20.8M9.4 21V25.8" stroke="#666" stroke-width="1.4"/><path d="M14 24.6L19 20.4L25.4 27.2L20.4 31.6Z" fill="#f7d27c"/><path d="M19 20.4L21.4 18.2L24.6 19.6L27.6 17L30.4 19.8L27.6 22.6L28.4 25.2L25.4 27.2Z" fill="#f4f4f4"/><path d="M13.2 24.6L19 19.6" stroke="#3b4453" stroke-width="1.2"/></svg>
<div class="t" style="left:996px;top:96px">特性</div>
<div class="t" style="left:996px;top:113px">匹配</div>
<svg style="left:1030px;top:61px" width="16" height="16"><path d="M8 8L4.00 1.07A8 8 0 0 1 12.00 1.07Z" fill="#ffc240"/><path d="M8 8L12.00 1.07A8 8 0 0 1 16.00 8.00Z" fill="#ff8a3c"/><path d="M8 8L16.00 8.00A8 8 0 0 1 12.00 14.93Z" fill="#ef5350"/><path d="M8 8L12.00 14.93A8 8 0 0 1 4.00 14.93Z" fill="#8e5cf7"/><path d="M8 8L4.00 14.93A8 8 0 0 1 0.00 8.00Z" fill="#29b6d8"/><path d="M8 8L0.00 8.00A8 8 0 0 1 4.00 1.07Z" fill="#4ccf7f"/></svg>
<svg style="left:1030px;top:85px" width="17" height="17"><rect x="0" y="0.6" width="16" height="1" fill="#dcdcdc"/><rect x="0" y="3.6" width="16" height="1.6" fill="#dcdcdc"/><rect x="0" y="7.2" width="16" height="2.6" fill="#dcdcdc"/><rect x="0" y="12" width="16" height="3.8" fill="#dcdcdc"/></svg>
<svg style="left:1030px;top:109px" width="17" height="17"><path d="M0 1.6H16" stroke="#dcdcdc" stroke-width="1.1" stroke-dasharray="1 1"/><path d="M0 5.2H16" stroke="#dcdcdc" stroke-width="1.1" stroke-dasharray="3.4 1"/><path d="M0 8.8H16" stroke="#dcdcdc" stroke-width="1.1"/><path d="M0 12.4H16" stroke="#dcdcdc" stroke-width="1.1" stroke-dasharray="4 1.2 1.4 1.2"/><path d="M0 15.6H16" stroke="#dcdcdc" stroke-width="0"/></svg>
<div class="abs" style="left:1048px;top:58px;width:180px;height:22px;background:#4b566a;border:1px solid #2c333f"></div>
<svg style="left:1218px;top:67px" width="8.4" height="5"><path d="M0 0H7.4L3.7 4Z" fill="#d4d4d4"/></svg>
<div class="abs" style="left:1048px;top:82px;width:180px;height:22px;background:#4b566a;border:1px solid #2c333f"></div>
<svg style="left:1218px;top:91px" width="8.4" height="5"><path d="M0 0H7.4L3.7 4Z" fill="#d4d4d4"/></svg>
<div class="abs" style="left:1048px;top:106px;width:180px;height:22px;background:#4b566a;border:1px solid #2c333f"></div>
<svg style="left:1218px;top:115px" width="8.4" height="5"><path d="M0 0H7.4L3.7 4Z" fill="#d4d4d4"/></svg>
<div class="abs" style="left:1061px;top:61px;width:16px;height:16px;background:#ffffff;border:1px solid #cfcfcf"></div>
<div class="t" style="left:1087px;top:62px;color:#f0f0f0;font-size:12.4px;letter-spacing:0">ByLayer</div>
<div class="abs" style="left:1052px;top:92px;width:64px;height:1px;background:#f0f0f0"></div>
<div class="t" style="left:1118px;top:86px;color:#f0f0f0;font-size:12.4px;letter-spacing:0">ByLayer</div>
<div class="abs" style="left:1052px;top:116px;width:64px;height:1px;background:#f0f0f0"></div>
<div class="t" style="left:1118px;top:110px;color:#f0f0f0;font-size:12.4px;letter-spacing:0">ByLayer</div>
<div class="t pt" style="left:1084px;top:135px">特性</div>
<svg style="left:1114px;top:139px" width="8.4" height="5"><path d="M0 0H7.4L3.7 4Z" fill="#d4d4d4"/></svg>
<svg style="left:1220px;top:139px" width="6" height="6"><path d="M0.5 0.5L4.4 4.4" stroke="#dcdcdc" stroke-width="1.1"/><path d="M5 1.2V5H1.2" fill="none" stroke="#dcdcdc" stroke-width="1.1"/></svg>
<svg style="left:1235px;top:60px" width="34" height="33"><path d="M5 5.6H1.2V31.2H5M18.6 31.2H22.4V18" fill="none" stroke="#f0f0f0" stroke-width="1.4"/><rect x="7" y="8.6" width="9.4" height="7" fill="#4a6488" stroke="#62b8f6" stroke-width="1.2"/><circle cx="11.6" cy="24" r="4.8" fill="#6b7280" stroke="#dcdcdc" stroke-width="1.2"/><path d="M24.60 0.20L25.90 5.26L30.40 2.60L27.74 7.10L32.80 8.40L27.74 9.70L30.40 14.20L25.90 11.54L24.60 16.60L23.30 11.54L18.80 14.20L21.46 9.70L16.40 8.40L21.46 7.10L18.80 2.60L23.30 5.26Z" fill="#fdd17a"/></svg>
<div class="t" style="left:1246px;top:96px">组</div>
<svg style="left:1276px;top:61px" width="17" height="17"><g transform="translate(3,0)"><rect x="1" y="2.6" width="5.4" height="3.8" fill="#4a6488" stroke="#62b8f6" stroke-width="1.1"/><circle cx="3.8" cy="11.4" r="2.7" fill="#6b7280" stroke="#dcdcdc" stroke-width="1.1"/></g><path d="M9.4 0.8H12.4V15.6H9.4" fill="none" stroke="#f0f0f0" stroke-width="1.1"/><path d="M9.6 6.4L15.4 11.6M15.4 6.4L9.6 11.6" stroke="#f0475a" stroke-width="1.7"/></svg>
<svg style="left:1276px;top:85px" width="17" height="17"><path d="M3.2 0.8H0.6V14H3.2M8.6 0.8H11.2V6" fill="none" stroke="#f0f0f0" stroke-width="1.1"/><g transform="translate(2.2,0)"><rect x="1" y="3" width="4.6" height="3.2" fill="#4a6488" stroke="#62b8f6" stroke-width="1.1"/><circle cx="3.4" cy="10.2" r="2.4" fill="#6b7280" stroke="#dcdcdc" stroke-width="1.1"/></g><path d="M7.6 16L8.2 13.4L10.2 15.4Z" fill="#efefef"/><path d="M8.2 13.4L13 8.6L15 10.6L10.2 15.4Z" fill="#f7cf73"/><path d="M13 8.6L14.2 7.4L16.2 9.4L15 10.6Z" fill="#ee4f5f"/></svg>
<div class="abs" style="left:1272px;top:106px;width:24px;height:22px;background:#45607f;border:1px solid #5eb4f5"></div>
<svg style="left:1276px;top:109px" width="17" height="17"><path d="M3.2 0.8H0.6V14H3.2M8.6 0.8H11.2V4" fill="none" stroke="#f0f0f0" stroke-width="1.1"/><g transform="translate(2.2,0)"><rect x="1" y="3" width="4.6" height="3.2" fill="none" stroke="#5fd07c" stroke-width="1.2"/><circle cx="3.4" cy="10.2" r="2.4" fill="none" stroke="#5fd07c" stroke-width="1.2"/></g><path d="M9.40 5.40L9.40 14.33L11.49 12.43L13.01 15.85L14.53 15.09L13.01 11.86L15.86 11.67Z" fill="#f4f4f4"/></svg>
<div class="t pt" style="left:1252px;top:135px">组</div>
<svg style="left:1270px;top:139px" width="8.4" height="5"><path d="M0 0H7.4L3.7 4Z" fill="#d4d4d4"/></svg>
<svg style="left:1310px;top:72px" width="29" height="8"><rect x="0" y="0.6" width="28.4" height="6" fill="#fdd17a"/><rect x="1.6" y="0" width="1" height="1.6" fill="#3b4453"/><rect x="4.2" y="0" width="1" height="2.6" fill="#3b4453"/><rect x="6.8" y="0" width="1" height="1.6" fill="#3b4453"/><rect x="9.4" y="0" width="1" height="2.6" fill="#3b4453"/><rect x="12.0" y="0" width="1" height="1.6" fill="#3b4453"/><rect x="14.6" y="0" width="1" height="2.6" fill="#3b4453"/><rect x="17.2" y="0" width="1" height="1.6" fill="#3b4453"/><rect x="19.8" y="0" width="1" height="2.6" fill="#3b4453"/><rect x="22.4" y="0" width="1" height="1.6" fill="#3b4453"/><rect x="25.0" y="0" width="1" height="2.6" fill="#3b4453"/><rect x="27.6" y="0" width="1" height="1.6" fill="#3b4453"/></svg>
<div class="t" style="left:1312px;top:96px">测量</div>
<svg style="left:1322px;top:115px" width="6.4" height="4.2"><path d="M0 0H5.4L2.7 3.2Z" fill="#d4d4d4"/></svg>
<svg style="left:1352px;top:60px" width="17" height="18"><path d="M0.20 6.40L0.20 15.80L2.40 13.80L4.00 17.40L5.60 16.60L4.00 13.20L7.00 13.00Z" fill="#f4f4f4"/><path d="M9 0.6L5.4 5.4H7.6L6.4 8.6L10.4 3.8H8.2L10 0.6Z" fill="#fdd17a"/><rect x="7" y="8.4" width="9.4" height="8.6" fill="#f4f4f4"/><path d="M8.6 10.6H10M11 10.6H15M8.6 12.8H10M11 12.8H15M8.6 15H10M11 15H15" stroke="#2f7de0" stroke-width="1.1"/></svg>
<svg style="left:1352px;top:85px" width="17" height="17"><rect x="0.6" y="0.6" width="14.4" height="13.6" rx="1.4" fill="none" stroke="#5fd07c" stroke-width="1.2" stroke-dasharray="2 1.1"/><path d="M3 3.4H9V5.8H5.4V9H3Z" fill="#5fd07c"/><path d="M6.6 5H12.6V12H6.6V9.6H10.2V7.2H6.6Z" fill="#5fd07c"/><rect x="6" y="4.6" width="6.6" height="7.2" fill="#5fd07c"/><rect x="3" y="2.6" width="6.6" height="7" fill="none" stroke="#5fd07c" stroke-width="1.4"/><path d="M9.00 5.40L9.00 14.80L11.20 12.80L12.80 16.40L14.40 15.60L12.80 12.20L15.80 12.00Z" fill="#f4f4f4"/></svg>
<svg style="left:1354px;top:109px" width="13" height="17"><rect x="0" y="0" width="12.4" height="16.4" fill="#dcdcdc"/><rect x="2.2" y="2.2" width="8" height="2.6" fill="#6a6f78"/><rect x="3.0" y="6.6" width="1.9" height="1.9" fill="#4a4f5a"/><rect x="3.0" y="9.7" width="1.9" height="1.9" fill="#4a4f5a"/><rect x="3.0" y="12.8" width="1.9" height="1.9" fill="#4a4f5a"/><rect x="6.2" y="6.6" width="1.9" height="1.9" fill="#4a4f5a"/><rect x="6.2" y="9.7" width="1.9" height="1.9" fill="#4a4f5a"/><rect x="6.2" y="12.8" width="1.9" height="1.9" fill="#4a4f5a"/><rect x="9.4" y="6.6" width="1.9" height="1.9" fill="#4a4f5a"/><rect x="9.4" y="9.7" width="1.9" height="1.9" fill="#4a4f5a"/><rect x="9.4" y="12.8" width="1.9" height="1.9" fill="#4a4f5a"/></svg>
<div class="t pt" style="left:1306px;top:135px">实用工具</div>
<svg style="left:1360px;top:139px" width="8.4" height="5"><path d="M0 0H7.4L3.7 4Z" fill="#d4d4d4"/></svg>
<svg style="left:1386px;top:60px" width="28" height="33"><rect x="1" y="3" width="22" height="25.4" fill="#dfae72"/><path d="M7 3Q7 1.2 9.4 1.2H10.4Q10.6 0 12 0T13.6 1.2H14.6Q17 1.2 17 3V4H7Z" fill="#f4f4f4"/><rect x="7.6" y="8.4" width="20" height="24.4" fill="#3b4453"/><path d="M9 10H21L27 16V32H9Z" fill="#dadada"/><path d="M21 10L27 16H21Z" fill="#f4f4f4"/></svg>
<div class="t" style="left:1388px;top:96px">粘贴</div>
<svg style="left:1398px;top:115px" width="6.4" height="4.2"><path d="M0 0H5.4L2.7 3.2Z" fill="#d4d4d4"/></svg>
<svg style="left:1428px;top:61px" width="17" height="17"><rect x="0" y="0" width="11.4" height="13.6" fill="#dcdcdc"/><path d="M2 3H8M2 6H7M2 9H6" stroke="#4a4f5a" stroke-width="1.1"/><path d="M6.4 5.6L13.6 13M15.6 6L9.6 13" stroke="#3b4453" stroke-width="2.6"/><path d="M6.6 5.8L13.4 12.8M15.4 6.2L9.8 12.8" stroke="#f4f4f4" stroke-width="1.2"/><circle cx="9" cy="14.2" r="1.5" fill="none" stroke="#f4f4f4" stroke-width="1.1"/><circle cx="14" cy="14.2" r="1.5" fill="none" stroke="#f4f4f4" stroke-width="1.1"/></svg>
<svg style="left:1429px;top:85px" width="14" height="17"><path d="M0 0H6.6L9 2.4V12H0Z" fill="#dcdcdc"/><rect x="2.8" y="3" width="11" height="13.4" fill="#3b4453"/><path d="M3.8 4H10L13.2 7.2V16.2H3.8Z" fill="#dcdcdc"/><path d="M10 4L13.2 7.2H10Z" fill="#f8f8f8"/></svg>
<div class="t pt" style="left:1395px;top:135px">剪贴板</div>
<svg style="left:1465px;top:64px" width="32" height="24"><path d="M0 0H14V10H32V24H0Z" fill="#dcdcdc"/></svg>
<div class="t" style="left:1469px;top:96px">基点</div>
<svg style="left:1479px;top:115px" width="6.4" height="4.2"><path d="M0 0H5.4L2.7 3.2Z" fill="#d4d4d4"/></svg>
<div class="t pt" style="left:1456px;top:135px">视图</div>
<svg style="left:1486px;top:139px" width="8.4" height="5"><path d="M0 0H7.4L3.7 4Z" fill="#d4d4d4"/></svg>
<svg style="left:1501px;top:139px" width="6" height="6"><path d="M0.5 0.5L4.4 4.4" stroke="#dcdcdc" stroke-width="1.1"/><path d="M5 1.2V5H1.2" fill="none" stroke="#dcdcdc" stroke-width="1.1"/></svg>
<!--DOCTABS-->
<svg style="left:0;top:153px" width="320" height="26"><path d="M7 24.4C16 24.4 22 23 25 14C27.5 5 30 2.4 36 2.4H140C146 2.4 148.5 5 151 14C154 23 160 24.4 169 24.4Z" fill="#303846"/><path d="M130 24.4C139 24.4 145 23 148 14C150.5 5 153 2.4 159 2.4H264C270 2.4 272.5 5 275 14C278 23 284 24.4 293 24.4Z" fill="#3b4453"/><path d="M281 7.4H294C300 7.4 302 11 302 17V20.4H291C285 20.4 283 15 281 7.4Z" fill="#303846"/><path d="M288.4 13.9H296M292.2 10.1V17.7" stroke="#b8bbc0" stroke-width="1.6"/><path d="M252.6 9.4L260.4 17.2M260.4 9.4L252.6 17.2" stroke="#b4b8be" stroke-width="1.6"/></svg>
<div class="t" style="left:38px;top:159px;color:#b9bec7">开始</div>
<div class="t" style="left:161px;top:159px;font-weight:bold;font-size:13px;color:#f4f4f4;letter-spacing:0.25px">Drawing1*</div>
<!--DRAWING-->
<div class="t" style="left:10px;top:186px;color:#e0e0e0;font-size:13px;letter-spacing:0.2px">[−][俯视][二维线框<span style="margin-left:-4px">]</span></div>
<div class="abs" style="left:1853px;top:197px;width:10px;height:3px;background:#e8e8e8"></div>
<svg style="left:1873px;top:191px" width="11" height="11"><path d="M3 2.6V0.8H10.2V8H8.4" fill="none" stroke="#e8e8e8" stroke-width="1.4"/><rect x="1" y="3.4" width="6.6" height="6.6" fill="none" stroke="#e8e8e8" stroke-width="2"/></svg>
<svg style="left:1892px;top:192px" width="11" height="9"><path d="M1 0.6L9.6 8.4M9.6 0.6L1 8.4" stroke="#e8e8e8" stroke-width="2.4"/></svg>
<svg style="left:0;top:0" width="1920" height="1035" shape-rendering="crispEdges"><circle cx="443.5" cy="481.5" r="132" fill="none" stroke="#fff" stroke-width="1.25"/><path d="M452.5 333.5L764.5 509.5L478.5 609.5" fill="none" stroke="#fff" stroke-width="1"/><path d="M1259 762.5H1356M1307.5 714V811" stroke="#fff" stroke-width="1"/><rect x="1304.5" y="759.5" width="6" height="6" fill="#212830" stroke="#fff" stroke-width="1"/><path d="M25.5 937V986.5H76" fill="none" stroke="#fff" stroke-width="1"/><rect x="22.5" y="981.5" width="8" height="9" fill="none" stroke="#fff" stroke-width="1"/><path d="M80.5 972.5L93.5 985.5M93.5 972.5L80.5 985.5" stroke="#fff" stroke-width="1.1"/><path d="M27.5 920.5L33.5 927L40 920.5M33.5 927V933" fill="none" stroke="#fff" stroke-width="1"/></svg>
<svg style="left:1765px;top:221px" width="132" height="132"><circle cx="66" cy="66" r="53.7" fill="none" stroke="#424952" stroke-width="13.4"/><rect x="40" y="40" width="52" height="52" fill="#a9abad"/><rect x="49.6" y="49.6" width="32.6" height="32.6" fill="#959aa2"/></svg>
<div class="t" style="left:1821.5px;top:221px;font-family:'Liberation Serif','Noto Serif CJK SC',serif;color:#c2c2c2;font-size:19px;line-height:20px;height:20px;font-weight:600">北</div>
<div class="t" style="left:1821.5px;top:335px;font-family:'Liberation Serif','Noto Serif CJK SC',serif;color:#c2c2c2;font-size:19px;line-height:20px;height:20px;font-weight:600">南</div>
<div class="t" style="left:1764.5px;top:278px;font-family:'Liberation Serif','Noto Serif CJK SC',serif;color:#c2c2c2;font-size:19px;line-height:20px;height:20px;font-weight:600">西</div>
<div class="t" style="left:1877.5px;top:278px;font-family:'Liberation Serif','Noto Serif CJK SC',serif;color:#c2c2c2;font-size:19px;line-height:20px;height:20px;font-weight:600">东</div>
<div class="t" style="left:1816px;top:269px;font-family:'Liberation Serif','Noto Serif CJK SC',serif;color:#59606b;font-size:30px;line-height:34px;height:34px;font-weight:300">上</div>
<div class="abs" style="left:1807px;top:375px;width:48px;height:17px;background:#9496a6;border:1px solid #a8aab8;border-radius:4px"></div>
<div class="t" style="left:1811px;top:374px;font-size:10.5px;color:#4a4f5a;letter-spacing:0">WCS</div>
<svg style="left:1841px;top:380px" width="9" height="7"><path d="M0.6 0.8H7.8L4.2 5.4Z" fill="none" stroke="#c8cad4" stroke-width="0.9"/></svg>
<div class="abs" style="left:1878px;top:417px;width:32px;height:212px;background:#595d64;border-radius:4px"></div>
<svg style="left:1878px;top:417px" width="32" height="212"><circle cx="26" cy="5" r="3" fill="none" stroke="#474b53" stroke-width="1"/><path d="M24.4 3.4L27.6 6.6M27.6 3.4L24.4 6.6" stroke="#474b53" stroke-width="0.8"/><path d="M16 19.4H24Q27 19.4 27 22.4V30.4A11 11 0 1 1 16 19.4Z" fill="none" stroke="#474b53" stroke-width="1.4"/><circle cx="16" cy="29.4" r="5.6" fill="none" stroke="#474b53" stroke-width="1.4"/><path d="M11.4 33L8.4 37M20.6 33L23.6 37" stroke="#474b53" stroke-width="1.2"/><path d="M13.6 48.6H19L16.3 51.4Z" fill="#474b53"/><path d="M3 56.5H29" stroke="#50545b" stroke-width="1"/><path d="M9.6 77.4C7 74 5.6 72.6 4.6 71.4C3.6 70 5.4 68.6 7 70L10 72.8V64.6Q10.4 62.8 12 63.6L12.6 70V61.4Q13.6 59.6 15.2 61L15.6 69.6L16.4 61.6Q17.6 60 19 61.6V70L20.8 64.4Q22.4 63.2 23 65L21.6 74C21.4 78 20.6 80 19.4 82H11.6C10.8 80.4 10.4 79 9.6 77.4Z" fill="none" stroke="#474b53" stroke-width="1.2"/><path d="M5 90L19 104M19 90L5 104" stroke="#474b53" stroke-width="1.4"/><path d="M4 93.4V89H8.4M15.6 89H20V93.4M4 100.6V105H8.4" fill="none" stroke="#474b53" stroke-width="1.4"/><circle cx="20.6" cy="105.6" r="4.4" fill="#595d64" stroke="#474b53" stroke-width="1.4"/><path d="M24 109L27.6 112.6" stroke="#474b53" stroke-width="2.4"/><path d="M13.6 118.6H19L16.3 121.4Z" fill="#474b53"/><ellipse cx="16" cy="140" rx="10.6" ry="4.4" fill="none" stroke="#474b53" stroke-width="1.4"/><path d="M14 148V132H11.6L16 126.4L20.4 132H18V148Z" fill="#595d64" stroke="#474b53" stroke-width="1.2"/><path d="M6.6 143.6L11 140.4V146.8Z" fill="#474b53"/><path d="M13.6 156.6H19L16.3 159.4Z" fill="#474b53"/><path d="M3 164.5H29" stroke="#50545b" stroke-width="1"/><rect x="4.6" y="168.6" width="6" height="6" fill="none" stroke="#474b53" stroke-width="1"/><rect x="12.6" y="168.6" width="6" height="6" fill="none" stroke="#474b53" stroke-width="1"/><rect x="20.6" y="168.6" width="6" height="6" fill="none" stroke="#474b53" stroke-width="1"/><rect x="4.6" y="178.6" width="16" height="12.4" fill="none" stroke="#474b53" stroke-width="1"/><path d="M9.6 181L16.4 184.8L9.6 188.6Z" fill="#474b53"/><circle cx="26" cy="206" r="3" fill="none" stroke="#474b53" stroke-width="1"/><path d="M23.6 205.4H28.4" stroke="#474b53" stroke-width="1"/></svg>
<!--STATUS-->
<svg style="left:0;top:1007px" width="220" height="20"><path d="M12 1C18 1 19 4 20.4 9C22 15 23 18 28 18H56C60 18 61.4 15 63 9C64.4 4 65.6 1 71 1Z" fill="#3b4453"/><path d="M62 1H70V18H72H68C64.6 18 64 15 62.6 9.6Z" fill="#2f3744"/><path d="M71 1H111V18H71Z" fill="#2f3744"/><path d="M111 1H123C119 1 118.4 5 117 10C115.6 15 114.6 18 111 18Z" fill="#2f3744"/><path d="M117 1H125V18H123C121 18 120.4 16 119 10Z" fill="#2f3744"/><path d="M125 1H165V18H125Z" fill="#2f3744"/><path d="M165 1H177C173 1 172.4 5 171 10C169.6 15 168.6 18 165 18Z" fill="#2f3744"/><path d="M182 1H198C196 9 194 16 188 16H177C180 14 181 8 182 1Z" fill="#2f3744"/><path d="M184 9H192M188 5V13" stroke="#c0c0c0" stroke-width="1.5"/></svg>
<div class="t" style="left:29px;top:1009px;font-weight:bold;color:#ffffff">模型</div>
<div class="t" style="left:76px;top:1009px;color:#c3c8d0;font-size:12.5px;letter-spacing:-0.3px">布局1</div>
<div class="t" style="left:130px;top:1009px;color:#c3c8d0;font-size:12.5px;letter-spacing:-0.3px">布局2</div>
<div class="abs" style="left:392px;top:980px;width:56px;height:27px;background:#2a303c;border-radius:3px 0 0 0"></div>
<svg style="left:396px;top:984px" width="6" height="18"><rect x="0" y="0.0" width="1.9" height="1.7" fill="#d0d0d0"/><rect x="0" y="2.55" width="1.9" height="1.7" fill="#d0d0d0"/><rect x="0" y="5.1" width="1.9" height="1.7" fill="#d0d0d0"/><rect x="0" y="7.6499999999999995" width="1.9" height="1.7" fill="#d0d0d0"/><rect x="0" y="10.2" width="1.9" height="1.7" fill="#d0d0d0"/><rect x="0" y="12.75" width="1.9" height="1.7" fill="#d0d0d0"/><rect x="0" y="15.299999999999999" width="1.9" height="1.7" fill="#d0d0d0"/><rect x="3" y="0.0" width="1.9" height="1.7" fill="#d0d0d0"/><rect x="3" y="2.55" width="1.9" height="1.7" fill="#d0d0d0"/><rect x="3" y="5.1" width="1.9" height="1.7" fill="#d0d0d0"/><rect x="3" y="7.6499999999999995" width="1.9" height="1.7" fill="#d0d0d0"/><rect x="3" y="10.2" width="1.9" height="1.7" fill="#d0d0d0"/><rect x="3" y="12.75" width="1.9" height="1.7" fill="#d0d0d0"/><rect x="3" y="15.299999999999999" width="1.9" height="1.7" fill="#d0d0d0"/></svg>
<svg style="left:407px;top:988px" width="9" height="9"><path d="M0.5 0.5L7.9 7.9M7.9 0.5L0.5 7.9" stroke="#d4d4d4" stroke-width="1.7"/></svg>
<svg style="left:427px;top:987px" width="16" height="15"><path d="M1.6 13.4L9.6 5.4" stroke="#d4d4d4" stroke-width="2.2" stroke-linecap="round"/><path d="M13.6 0.8A3.6 3.6 0 1 0 14.6 5L12 5.6L10.6 4.2L11.4 1.6Z" fill="#d4d4d4"/></svg>
<div class="abs" style="left:448px;top:981px;width:1079px;height:25px;background:#c0c1c3;border-radius:3px 0 0 3px"></div>
<svg style="left:452px;top:988px" width="16" height="12"><rect x="0.6" y="0.6" width="14.4" height="10.4" fill="none" stroke="#4c515b" stroke-width="1.2"/><rect x="0.6" y="0.6" width="14.4" height="2.2" fill="#4c515b"/><path d="M2.8 5L5.2 6.8L2.8 8.6M6.4 8.8H9.4" fill="none" stroke="#4c515b" stroke-width="1"/></svg>
<svg style="left:471px;top:992px" width="7.4" height="4.8"><path d="M0 0H6.4L3.2 3.8Z" fill="#4c515b"/></svg>
<div class="t" style="left:486px;top:985px;font-style:italic;color:#6c7078;letter-spacing:1.1px">键入命令</div>
<svg style="left:1517px;top:990px" width="8" height="5"><path d="M0 4H7.4L3.7 0Z" fill="#a8a9ab"/></svg>
<div class="abs" style="left:699px;top:1009px;width:1214px;height:24px;background:#3b4453"></div>
<div class="abs" style="left:880px;top:1009px;width:2px;height:24px;background:#262d38"></div>
<div class="abs" style="left:913px;top:1009px;width:2px;height:24px;background:#262d38"></div>
<div class="abs" style="left:980px;top:1009px;width:2px;height:24px;background:#262d38"></div>
<div class="abs" style="left:1006px;top:1009px;width:2px;height:24px;background:#262d38"></div>
<div class="abs" style="left:1031px;top:1009px;width:2px;height:24px;background:#262d38"></div>
<div class="abs" style="left:1055px;top:1009px;width:2px;height:24px;background:#262d38"></div>
<div class="abs" style="left:1080px;top:1009px;width:2px;height:24px;background:#262d38"></div>
<div class="abs" style="left:1117px;top:1009px;width:2px;height:24px;background:#262d38"></div>
<div class="abs" style="left:1135px;top:1009px;width:2px;height:24px;background:#262d38"></div>
<div class="abs" style="left:1201px;top:1009px;width:2px;height:24px;background:#262d38"></div>
<div class="abs" style="left:1226px;top:1009px;width:2px;height:24px;background:#262d38"></div>
<div class="abs" style="left:1251px;top:1009px;width:2px;height:24px;background:#262d38"></div>
<div class="abs" style="left:1276px;top:1009px;width:2px;height:24px;background:#262d38"></div>
<div class="abs" style="left:1318px;top:1009px;width:2px;height:24px;background:#262d38"></div>
<div class="abs" style="left:1344px;top:1009px;width:2px;height:24px;background:#262d38"></div>
<div class="abs" style="left:1384px;top:1009px;width:2px;height:24px;background:#262d38"></div>
<div class="abs" style="left:1408px;top:1009px;width:2px;height:24px;background:#262d38"></div>
<div class="abs" style="left:1424px;top:1009px;width:2px;height:24px;background:#262d38"></div>
<div class="abs" style="left:1573px;top:1009px;width:2px;height:24px;background:#262d38"></div>
<div class="abs" style="left:1616px;top:1009px;width:2px;height:24px;background:#262d38"></div>
<div class="abs" style="left:1641px;top:1009px;width:2px;height:24px;background:#262d38"></div>
<div class="abs" style="left:1716px;top:1009px;width:2px;height:24px;background:#262d38"></div>
<div class="abs" style="left:1742px;top:1009px;width:2px;height:24px;background:#262d38"></div>
<div class="abs" style="left:1766px;top:1009px;width:2px;height:24px;background:#262d38"></div>
<div class="abs" style="left:1810px;top:1009px;width:2px;height:24px;background:#262d38"></div>
<div class="abs" style="left:1836px;top:1009px;width:2px;height:24px;background:#262d38"></div>
<div class="abs" style="left:1862px;top:1009px;width:2px;height:24px;background:#262d38"></div>
<div class="abs" style="left:1888px;top:1009px;width:2px;height:24px;background:#262d38"></div>
<div class="abs" style="left:1008px;top:1010px;width:22px;height:22px;background:#5b8cc3"></div>
<div class="abs" style="left:1057px;top:1010px;width:22px;height:22px;background:#5b8cc3"></div>
<div class="abs" style="left:1138px;top:1010px;width:22px;height:22px;background:#5b8cc3"></div>
<div class="abs" style="left:1162px;top:1010px;width:22px;height:22px;background:#5b8cc3"></div>
<div class="abs" style="left:1228px;top:1010px;width:22px;height:22px;background:#5b8cc3"></div>
<div class="abs" style="left:1321px;top:1010px;width:22px;height:22px;background:#5b8cc3"></div>
<div class="abs" style="left:1385px;top:1010px;width:22px;height:22px;background:#5b8cc3"></div>
<div class="abs" style="left:1428px;top:1010px;width:22px;height:22px;background:#5b8cc3"></div>
<div class="abs" style="left:1838px;top:1010px;width:22px;height:22px;background:#5b8cc3"></div>
<div class="t" style="left:718px;top:1013px;color:#f4f4f4;font-size:12px;letter-spacing:0">1739.3077, 345.8969, 0.0000</div>
<div class="t" style="left:885px;top:1013px;color:#f4f4f4">模型</div>
<svg style="left:919px;top:1013px" width="16" height="16"><path d="M2.6 0.6V15M7.6 0.6V15M12.6 0.6V15M0.4 5H15M0.4 10.6H15" stroke="#e8e8e8" stroke-width="1.2"/></svg>
<svg style="left:943px;top:1013px" width="16" height="16"><rect x="1.0" y="1.6" width="1.8" height="1.8" fill="#e8e8e8"/><rect x="1.0" y="7.0" width="1.8" height="1.8" fill="#e8e8e8"/><rect x="1.0" y="12.4" width="1.8" height="1.8" fill="#e8e8e8"/><rect x="6.4" y="1.6" width="1.8" height="1.8" fill="#e8e8e8"/><rect x="6.4" y="7.0" width="1.8" height="1.8" fill="#e8e8e8"/><rect x="6.4" y="12.4" width="1.8" height="1.8" fill="#e8e8e8"/><rect x="11.8" y="1.6" width="1.8" height="1.8" fill="#e8e8e8"/><rect x="11.8" y="7.0" width="1.8" height="1.8" fill="#e8e8e8"/><rect x="11.8" y="12.4" width="1.8" height="1.8" fill="#e8e8e8"/></svg>
<svg style="left:967px;top:1019px" width="8.4" height="5"><path d="M0 0H7.4L3.7 4Z" fill="#d8d8d8"/></svg>
<svg style="left:985px;top:1012px" width="18" height="18"><path d="M7.6 13.4V2H16.4V7.6H8" fill="none" stroke="#e8e8e8" stroke-width="1.2"/><rect x="0.6" y="9.6" width="7" height="7" fill="#e0e0e0"/></svg>
<svg style="left:1010px;top:1013px" width="18" height="16"><path d="M1 4.2H8M4.5 0.6V7.8" stroke="#fff" stroke-width="1.4"/><rect x="6" y="8.8" width="10" height="4.4" fill="#fff"/></svg>
<svg style="left:1035px;top:1013px" width="18" height="16"><path d="M2 0V14.6H16" fill="none" stroke="#e8e8e8" stroke-width="1.2"/><path d="M2 9.4H7.2V14.6" fill="none" stroke="#e8e8e8" stroke-width="1.1"/></svg>
<svg style="left:1060px;top:1013px" width="17" height="16"><circle cx="8" cy="8" r="5.6" fill="none" stroke="#fff" stroke-width="1.3"/></svg>
<svg style="left:1124px;top:1019px" width="8.4" height="5"><path d="M0 0H7.4L3.7 4Z" fill="#d8d8d8"/></svg>
<svg style="left:1140px;top:1013px" width="18" height="16"><path d="M14 2L1.6 13.6H17" fill="none" stroke="#fff" stroke-width="1.3"/><rect x="6.2" y="6.2" width="2.8" height="2.8" fill="#fff"/></svg>
<svg style="left:1164px;top:1012px" width="18" height="18"><rect x="3.4" y="3.4" width="13.4" height="13.4" fill="none" stroke="#fff" stroke-width="1.3"/><rect x="1" y="1" width="4.6" height="4.6" fill="#5b8cc3" stroke="#fff" stroke-width="1.2"/></svg>
<svg style="left:1189px;top:1019px" width="8.4" height="5"><path d="M0 0H7.4L3.7 4Z" fill="#d8d8d8"/></svg>
<svg style="left:1206px;top:1013px" width="17" height="16"><rect x="0" y="1" width="8" height="1.6" fill="#d0d0d0"/><rect x="0" y="5.4" width="8" height="2.4" fill="#d0d0d0"/><rect x="0" y="10.2" width="8" height="3.6" fill="#d0d0d0"/><path d="M0 1H16M0 5.6H16M0 10.4H16" stroke="#f0f0f0" stroke-width="0.9"/></svg>
<svg style="left:1231px;top:1013px" width="17" height="17"><rect x="0.6" y="0.6" width="15.4" height="15.4" fill="#5b8cc3" stroke="#fff" stroke-width="1.2"/><rect x="2.0" y="2.0" width="3.15" height="3.15" fill="#fff"/><rect x="2.0" y="8.3" width="3.15" height="3.15" fill="#fff"/><rect x="5.2" y="5.2" width="3.15" height="3.15" fill="#fff"/><rect x="5.2" y="11.4" width="3.15" height="3.15" fill="#fff"/><rect x="8.3" y="2.0" width="3.15" height="3.15" fill="#fff"/><rect x="8.3" y="8.3" width="3.15" height="3.15" fill="#fff"/><rect x="11.4" y="5.2" width="3.15" height="3.15" fill="#fff"/><rect x="11.4" y="11.4" width="3.15" height="3.15" fill="#fff"/></svg>
<svg style="left:1255px;top:1012px" width="19" height="18"><path d="M0.6 3.4H6.4M3.5 0.6V6.4" stroke="#e8e8e8" stroke-width="1.1"/><path d="M4.6 14.4V5.4H14" fill="none" stroke="#e8e8e8" stroke-width="1"/><rect x="7.4" y="7.4" width="9.6" height="9.6" fill="#82d8a0"/></svg>
<svg style="left:1280px;top:1013px" width="19" height="17"><path d="M4.6 12.4V4.4L8.6 0.8H16.4V9.4L12.4 13" fill="none" stroke="#e0e0e0" stroke-width="1.1"/><path d="M4.6 4.4H12.4V13H6M12.4 4.4L16.4 0.8" fill="none" stroke="#e0e0e0" stroke-width="1.1"/><rect x="0.8" y="11.2" width="4.4" height="4.4" fill="#3b4453" stroke="#f0a868" stroke-width="1.2"/></svg>
<svg style="left:1305px;top:1019px" width="8.4" height="5"><path d="M0 0H7.4L3.7 4Z" fill="#d8d8d8"/></svg>
<svg style="left:1324px;top:1012px" width="18" height="18"><path d="M3.6 2V14.4H15.6" fill="none" stroke="#fff" stroke-width="1.4"/><path d="M3.6 0L1 3.6H6.2ZM17.6 14.4L14 11.8V17Z" fill="#fff"/><path d="M11.6 3L8.4 7.2H10.6L9.4 10.2L13.2 5.8H11L12.6 3Z" fill="#fff"/></svg>
<svg style="left:1348px;top:1013px" width="16" height="16"><path d="M2 11.6V3.4L5.4 0.6H14.6V10L11.4 13" fill="none" stroke="#e0e0e0" stroke-width="1"/><rect x="2" y="3.4" width="9.4" height="9.6" fill="none" stroke="#e0e0e0" stroke-width="1" stroke-dasharray="3 1.4"/><rect x="0.4" y="1.8" width="3" height="3" fill="#62b8f6"/><rect x="9.8" y="1.8" width="3" height="3" fill="#62b8f6"/><rect x="0.4" y="11.4" width="3" height="3" fill="#62b8f6"/><rect x="9.8" y="11.4" width="3" height="3" fill="#62b8f6"/></svg>
<svg style="left:1372px;top:1019px" width="8.4" height="5"><path d="M0 0H7.4L3.7 4Z" fill="#d8d8d8"/></svg>
<svg style="left:1388px;top:1012px" width="17" height="18"><path d="M8.4 2.4L2 13H14.8Z" fill="none" stroke="#fff" stroke-width="1.1"/><path d="M8.4 2.4V9.4L2 13M8.4 9.4L14.8 13" fill="none" stroke="#fff" stroke-width="1.1"/><path d="M8.4 16.4L2 13M8.4 16.4L14.8 13" stroke="#fff" stroke-width="1.1"/><circle cx="8.4" cy="2.2" r="1.4" fill="#5b8cc3" stroke="#fff" stroke-width="0.9"/><circle cx="2" cy="13" r="1.4" fill="#5b8cc3" stroke="#fff" stroke-width="0.9"/><circle cx="14.8" cy="13" r="1.4" fill="#5b8cc3" stroke="#fff" stroke-width="0.9"/></svg>
<svg style="left:1412px;top:1019px" width="8.4" height="5"><path d="M0 0H7.4L3.7 4Z" fill="#d8d8d8"/></svg>
<svg style="left:1431px;top:1013px" width="20" height="16"><path d="M8 0.6L10.6 9.6L15.4 14.6L9.6 12.6L8 15.6L6.4 12.6L0.6 14.6L5.4 9.6Z" fill="#fff"/><circle cx="15.6" cy="3" r="2" fill="none" stroke="#fff" stroke-width="1"/></svg>
<svg style="left:1455px;top:1013px" width="20" height="16"><path d="M8 0.6L10.6 9.6L15.4 14.6L9.6 12.6L8 15.6L6.4 12.6L0.6 14.6L5.4 9.6Z" fill="#e8e8e8"/><path d="M14 4L17 1M15 1H17V3" stroke="#e8e8e8" stroke-width="0.9" fill="none"/></svg>
<svg style="left:1479px;top:1013px" width="16" height="16"><path d="M8 0.6L10.6 9.6L15.4 14.6L9.6 12.6L8 15.6L6.4 12.6L0.6 14.6L5.4 9.6Z" fill="#e8e8e8"/></svg>
<div class="t" style="left:1505px;top:1013px;color:#f0f0f0;font-size:12.4px;letter-spacing:-0.6px">1:1 / 100%</div>
<svg style="left:1559px;top:1019px" width="8.4" height="5"><path d="M0 0H7.4L3.7 4Z" fill="#d8d8d8"/></svg>
<svg style="left:1577px;top:1013px" width="16" height="16"><circle cx="8" cy="8" r="4.4" fill="none" stroke="#e8e8e8" stroke-width="3" stroke-dasharray="2.4 1.2"/></svg>
<svg style="left:1600px;top:1019px" width="8.4" height="5"><path d="M0 0H7.4L3.7 4Z" fill="#d8d8d8"/></svg>
<svg style="left:1621px;top:1013px" width="16" height="16"><path d="M0.6 8H15.4M8 0.6V15.4" stroke="#f0f0f0" stroke-width="1.6"/></svg>
<svg style="left:1648px;top:1013px" width="10" height="16"><rect x="0" y="0.6" width="8" height="14.8" fill="#f0f0f0"/></svg>
<div class="t" style="left:1675px;top:1013px;color:#f0f0f0">小数</div>
<svg style="left:1727px;top:1019px" width="8.4" height="5"><path d="M0 0H7.4L3.7 4Z" fill="#d8d8d8"/></svg>
<svg style="left:1749px;top:1013px" width="12" height="16"><rect x="0.6" y="0.6" width="10.4" height="14.4" fill="none" stroke="#e0e0e0" stroke-width="1"/><path d="M2.4 4H4M5.4 4H9.4M2.4 8H4M5.4 8H9.4M2.4 12H4M5.4 12H9.4" stroke="#e0e0e0" stroke-width="1"/></svg>
<svg style="left:1773px;top:1013px" width="18" height="16"><rect x="0.6" y="0.6" width="13" height="10" fill="none" stroke="#e0e0e0" stroke-width="1"/><rect x="8.6" y="10" width="6.4" height="5" fill="#62b8f6"/><path d="M12.4 10V8A2 2 0 0 1 16.4 8" fill="none" stroke="#62b8f6" stroke-width="1.1"/></svg>
<svg style="left:1797px;top:1019px" width="8.4" height="5"><path d="M0 0H7.4L3.7 4Z" fill="#d8d8d8"/></svg>
<svg style="left:1815px;top:1012px" width="18" height="18"><rect x="0.6" y="0.6" width="6" height="6" fill="none" stroke="#e0e0e0" stroke-width="1"/><circle cx="12.6" cy="6.6" r="3" fill="none" stroke="#e0e0e0" stroke-width="1"/><path d="M6.4 10.6L9.4 16H3.4Z" fill="none" stroke="#e0e0e0" stroke-width="1"/></svg>
<svg style="left:1841px;top:1013px" width="16" height="16"><circle cx="8" cy="8" r="7" fill="none" stroke="#fff" stroke-width="1.2"/><path d="M4 12L12 4" stroke="#fff" stroke-width="1.6"/></svg>
<svg style="left:1867px;top:1013px" width="18" height="16"><rect x="0.6" y="1.6" width="15.4" height="11.4" fill="none" stroke="#e0e0e0" stroke-width="1"/><path d="M3 10.6L6.4 7.2M9.6 7L13 3.6M10.4 3.6H13V6.2M3 8V10.6H5.6" fill="none" stroke="#62b8f6" stroke-width="1"/></svg>
<svg style="left:1893px;top:1013px" width="16" height="16"><path d="M0 2H14M0 7.4H14M0 12.8H14" stroke="#f0f0f0" stroke-width="2.2"/></svg>
<div class="abs" style="left:1048px;top:993px;width:68px;height:33px;background:#000"></div>
<div class="abs" style="left:1052px;top:996px;width:60px;height:25px;background:#fff;border-radius:5px"></div>
<div class="t" style="left:1056px;top:1001px;color:#444;font-size:13px;letter-spacing:0">CH</div>
<svg style="left:1079px;top:1002px" width="11" height="12"><path d="M5.4 0.8A5 5 0 1 1 0.8 8.4A6.6 6.6 0 0 0 5.4 0.8Z" fill="none" stroke="#444" stroke-width="1"/></svg>
<div class="t" style="left:1094px;top:1001px;color:#444;font-size:13px;letter-spacing:0">简</div>
<!--WATERMARK-->
<div class="abs" style="left:1445px;top:916px;width:472px;height:113px;background:rgba(248,248,248,0.63)"></div>
<div class="abs" style="left:1721px;top:916px;width:189px;height:113px;background:rgba(5,92,220,0.96);border-radius:30px"></div>
<div class="abs" style="left:1454.4px;top:919px;width:260px;height:64px;line-height:64px;font-family:'Liberation Serif','Noto Serif CJK SC',serif;font-weight:600;font-size:50px;color:#dd0808;-webkit-text-stroke:1.7px #dd0808;white-space:nowrap">电脑技术网</div>
<div class="abs" style="left:1456px;top:980px;width:260px;height:48px;line-height:48px;font-family:'Liberation Serif',serif;font-size:38px;color:#0a5ad8;-webkit-text-stroke:0.9px #0a5ad8;white-space:nowrap;opacity:.95">www.tagxp.com</div>
<div class="abs" style="left:1728.5px;top:916px;width:200px;height:108px;line-height:108px;font-family:'Liberation Sans',sans-serif;font-weight:bold;font-size:96px;color:#d9d9d9;white-space:nowrap;transform-origin:0 0;transform:scaleX(0.894)">TAG</div>
<div class="abs" id="edgeT"></div><div class="abs" id="edgeL1"></div><div class="abs" id="edgeL2"></div><div class="abs" id="edgeR1"></div><div class="abs" id="edgeR2"></div>
</body></html>
